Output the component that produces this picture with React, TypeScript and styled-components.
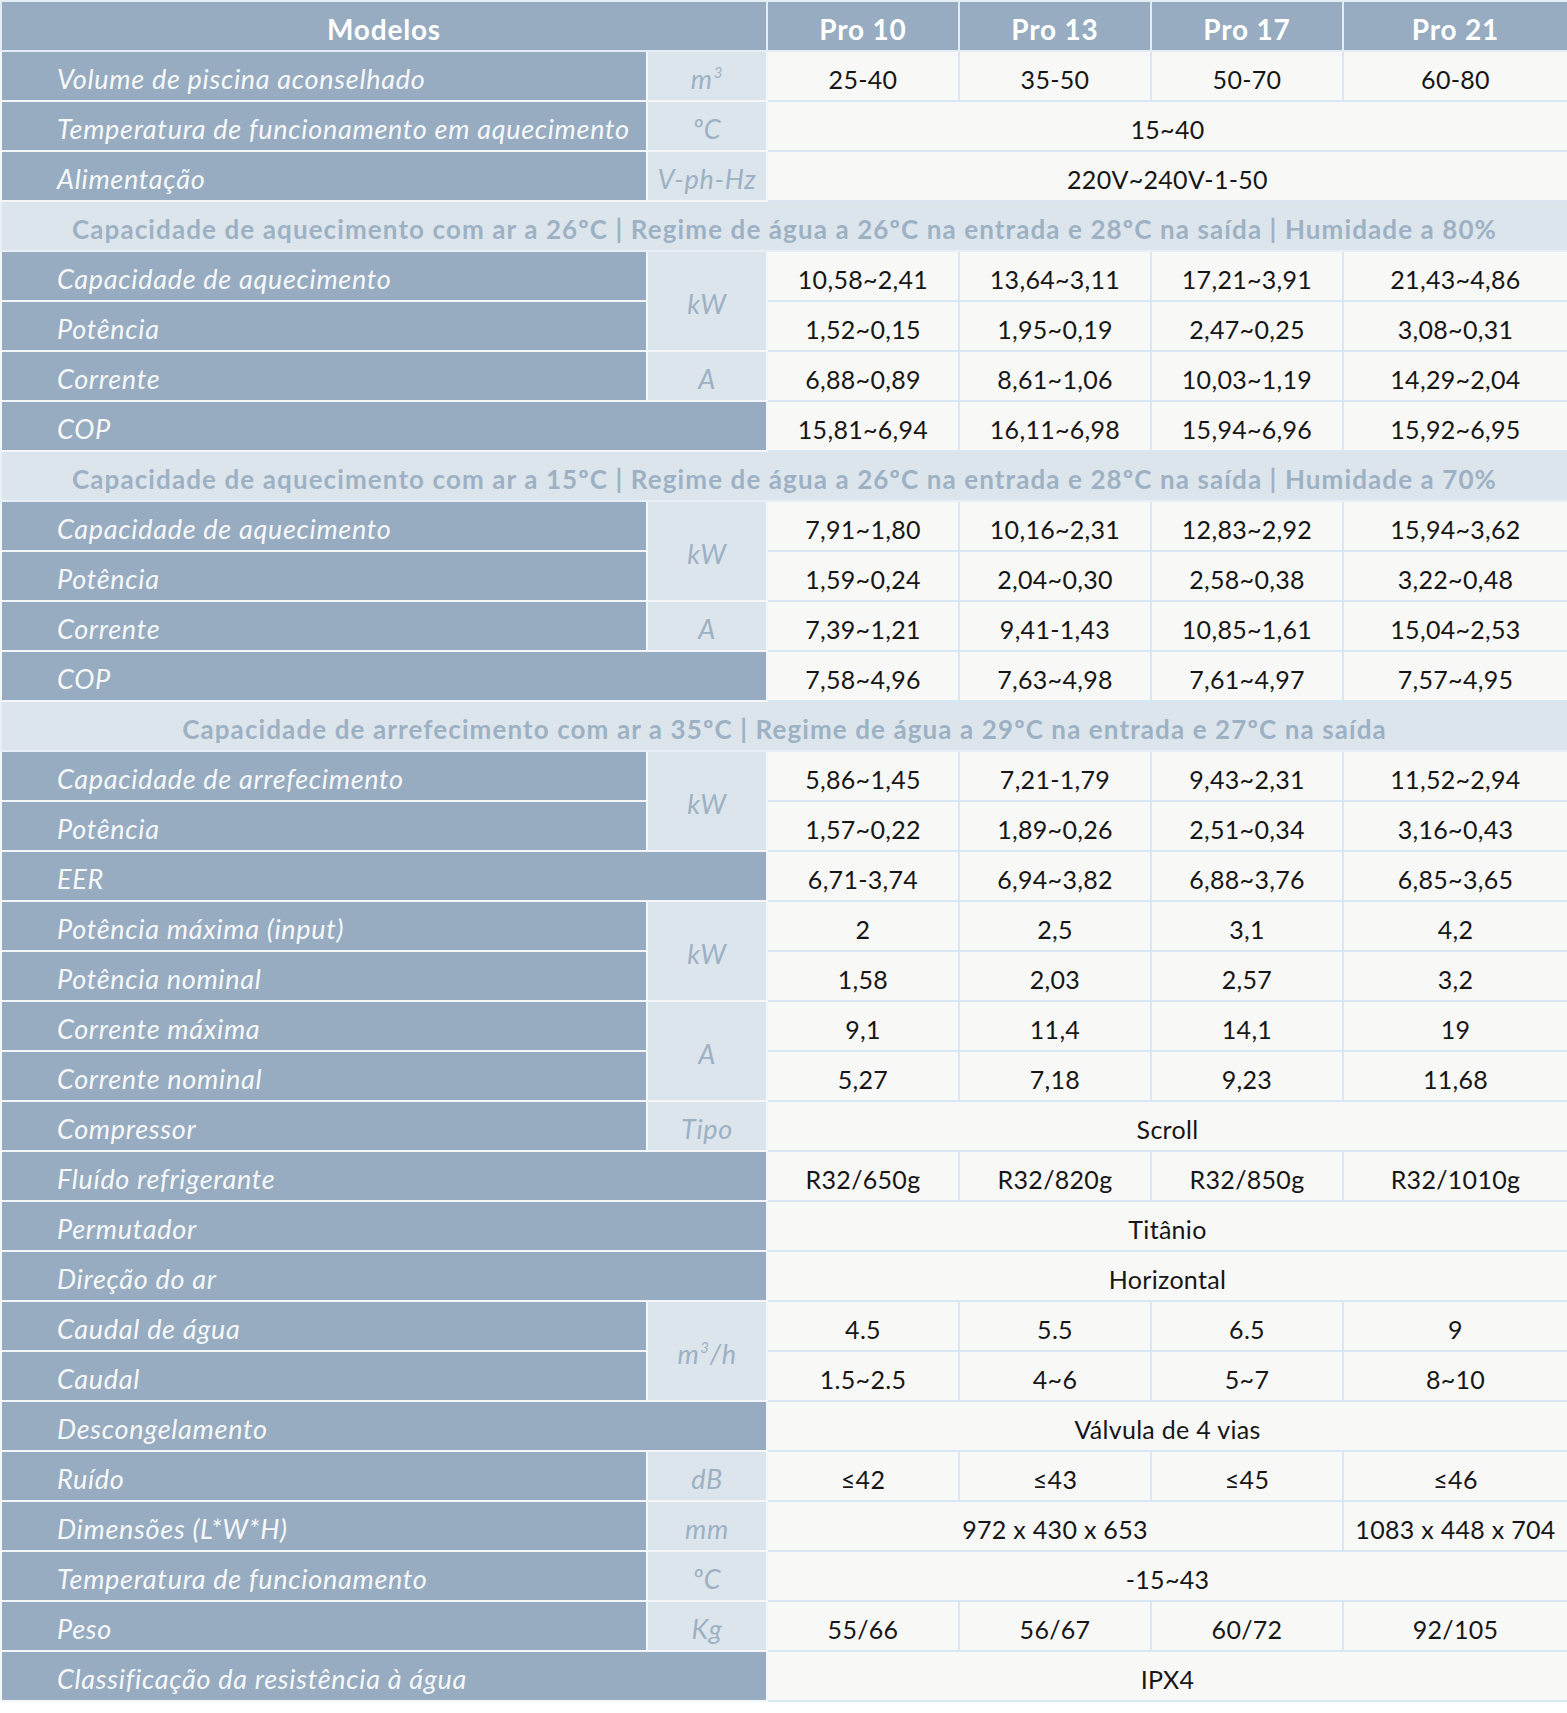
import React, { ReactNode } from "react";
import styled, { createGlobalStyle } from "styled-components";

const GlobalStyle = createGlobalStyle`
  html, body {
    margin: 0;
    padding: 0;
    background: #ffffff;
  }
  body {
    font-family: Lato, "Liberation Sans", sans-serif;
  }
`;

type Value = string | [string, number];

interface SpecRow {
  label: string;
  unit?: ReactNode;
  unitRows?: number;
  wide?: boolean;
  values: Value[];
}

interface SectionRow {
  section: string;
}

type Item = SpecRow | SectionRow;

const m3 = (
  <>
    m<sup>3</sup>
  </>
);

const items: Item[] = [
  { label: "Volume de piscina aconselhado", unit: m3, values: ["25-40", "35-50", "50-70", "60-80"] },
  { label: "Temperatura de funcionamento em aquecimento", unit: "ºC", values: [["15~40", 4]] },
  { label: "Alimentação", unit: "V-ph-Hz", values: [["220V~240V-1-50", 4]] },
  {
    section:
      "Capacidade de aquecimento com ar a 26ºC | Regime de água a 26ºC na entrada e 28ºC na saída | Humidade a 80%",
  },
  { label: "Capacidade de aquecimento", unit: "kW", unitRows: 2, values: ["10,58~2,41", "13,64~3,11", "17,21~3,91", "21,43~4,86"] },
  { label: "Potência", values: ["1,52~0,15", "1,95~0,19", "2,47~0,25", "3,08~0,31"] },
  { label: "Corrente", unit: "A", values: ["6,88~0,89", "8,61~1,06", "10,03~1,19", "14,29~2,04"] },
  { label: "COP", wide: true, values: ["15,81~6,94", "16,11~6,98", "15,94~6,96", "15,92~6,95"] },
  {
    section:
      "Capacidade de aquecimento com ar a 15ºC | Regime de água a 26ºC na entrada e 28ºC na saída | Humidade a 70%",
  },
  { label: "Capacidade de aquecimento", unit: "kW", unitRows: 2, values: ["7,91~1,80", "10,16~2,31", "12,83~2,92", "15,94~3,62"] },
  { label: "Potência", values: ["1,59~0,24", "2,04~0,30", "2,58~0,38", "3,22~0,48"] },
  { label: "Corrente", unit: "A", values: ["7,39~1,21", "9,41-1,43", "10,85~1,61", "15,04~2,53"] },
  { label: "COP", wide: true, values: ["7,58~4,96", "7,63~4,98", "7,61~4,97", "7,57~4,95"] },
  { section: "Capacidade de arrefecimento com ar a 35ºC | Regime de água a 29ºC na entrada e 27ºC na saída" },
  { label: "Capacidade de arrefecimento", unit: "kW", unitRows: 2, values: ["5,86~1,45", "7,21-1,79", "9,43~2,31", "11,52~2,94"] },
  { label: "Potência", values: ["1,57~0,22", "1,89~0,26", "2,51~0,34", "3,16~0,43"] },
  { label: "EER", wide: true, values: ["6,71-3,74", "6,94~3,82", "6,88~3,76", "6,85~3,65"] },
  { label: "Potência máxima (input)", unit: "kW", unitRows: 2, values: ["2", "2,5", "3,1", "4,2"] },
  { label: "Potência nominal", values: ["1,58", "2,03", "2,57", "3,2"] },
  { label: "Corrente máxima", unit: "A", unitRows: 2, values: ["9,1", "11,4", "14,1", "19"] },
  { label: "Corrente nominal", values: ["5,27", "7,18", "9,23", "11,68"] },
  { label: "Compressor", unit: "Tipo", values: [["Scroll", 4]] },
  { label: "Fluído refrigerante", wide: true, values: ["R32/650g", "R32/820g", "R32/850g", "R32/1010g"] },
  { label: "Permutador", wide: true, values: [["Titânio", 4]] },
  { label: "Direção do ar", wide: true, values: [["Horizontal", 4]] },
  {
    label: "Caudal de água",
    unit: (
      <>
        m<sup>3</sup>/h
      </>
    ),
    unitRows: 2,
    values: ["4.5", "5.5", "6.5", "9"],
  },
  { label: "Caudal", values: ["1.5~2.5", "4~6", "5~7", "8~10"] },
  { label: "Descongelamento", wide: true, values: [["Válvula de 4 vias", 4]] },
  { label: "Ruído", unit: "dB", values: ["≤42", "≤43", "≤45", "≤46"] },
  { label: "Dimensões (L*W*H)", unit: "mm", values: [["972 x 430 x 653", 3], "1083 x 448 x 704"] },
  { label: "Temperatura de funcionamento", unit: "ºC", values: [["-15~43", 4]] },
  { label: "Peso", unit: "Kg", values: ["55/66", "56/67", "60/72", "92/105"] },
  { label: "Classificação da resistência à água", wide: true, values: [["IPX4", 4]] },
];

const models = ["Pro 10", "Pro 13", "Pro 17", "Pro 21"];
// label, unit, then one width per model column
const colWidths = [646, 120, 192, 192, 192, 225];

const App = () => {
  return (
    <>
      <GlobalStyle />
      <SpecTable>
        <colgroup>
          {colWidths.map((w, i) => (
            <Col key={i} $width={w} />
          ))}
        </colgroup>
        <thead>
          <tr>
            <HeadCell colSpan={2}>Modelos</HeadCell>
            {models.map((m) => (
              <HeadCell key={m}>{m}</HeadCell>
            ))}
          </tr>
        </thead>
        <tbody>
          {items.map((item, i) =>
            "section" in item ? (
              <tr key={i}>
                <SectionCell colSpan={6}>{item.section}</SectionCell>
              </tr>
            ) : (
              <tr key={i}>
                <LabelCell colSpan={item.wide ? 2 : 1}>{item.label}</LabelCell>
                {item.unit !== undefined && <UnitCell rowSpan={item.unitRows ?? 1}>{item.unit}</UnitCell>}
                {item.values.map((v, j) =>
                  typeof v === "string" ? (
                    <DataCell key={j}>{v}</DataCell>
                  ) : (
                    <DataCell key={j} colSpan={v[1]}>
                      {v[0]}
                    </DataCell>
                  )
                )}
              </tr>
            )
          )}
        </tbody>
      </SpecTable>
    </>
  );
};

const SpecTable = styled.table`
  width: 1567px;
  table-layout: fixed;
  border-collapse: collapse;
  border: 2px solid #e4edf6;

  td,
  th {
    height: 43px;
    padding: 5px 0 0 0;
    border: 2px solid #e4edf6;
    vertical-align: middle;
    white-space: nowrap;
  }

  sup {
    font-size: 0.55em;
    line-height: 0;
    vertical-align: 0.75em;
    margin-left: 1px;
  }
`;

const Col = styled.col<{ $width: number }>`
  width: ${({ $width }) => $width}px;
`;

const HeadCell = styled.th`
  background: #97acc0;
  color: #ffffff;
  font-size: 28px;
  font-weight: 700;
  letter-spacing: 0.8px;
  text-align: center;
`;

const LabelCell = styled.td`
  background: #97acc0;
  color: #f6f8fa;
  font-size: 27px;
  font-style: italic;
  letter-spacing: 0.7px;
  text-align: left;
  && {
    padding-left: 55px;
    border-color: #f4f7fa;
  }
`;

const UnitCell = styled.td`
  background: #dde5ec;
  color: #9cb1c4;
  font-size: 27px;
  font-style: italic;
  letter-spacing: 0.7px;
  text-align: center;
  && {
    border-color: #f4f7fa;
  }
`;

const DataCell = styled.td`
  background: #f8f8f6;
  color: #161616;
  font-size: 25px;
  letter-spacing: 0.3px;
  text-align: center;
  && {
    border-color: #d9e6f3;
  }
`;

const SectionCell = styled.td`
  background: #dde5ec;
  color: #9db1c4;
  font-size: 26px;
  font-weight: 700;
  letter-spacing: 1.1px;
  text-align: center;
  && {
    border-color: #e8eff6;
  }
`;

export default App;
